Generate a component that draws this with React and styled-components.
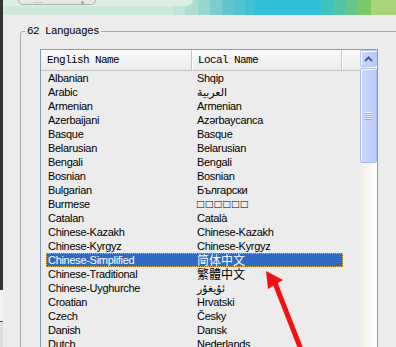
import React from 'react';
import styled, { createGlobalStyle } from 'styled-components';

const GlobalStyle = createGlobalStyle`
  html, body {
    margin: 0;
    padding: 0;
  }
  body {
    background: #ececec;
    overflow: hidden;
    font-family: "Liberation Sans", "DejaVu Sans", "Noto Sans CJK SC", sans-serif;
  }
`;

const Screen = styled.div`
  position: relative;
  display: flex;
  width: 396px;
  height: 347px;
  overflow: hidden;
  background: #ececec;
`;

const EdgeStrip = styled.div`
  flex: 0 0 3px;
  background: linear-gradient(to bottom, #343434 0px, #343434 290px, #f2f2f2 290px, #f2f2f2 321px, #4a4a4a 321px, #4a4a4a 322px, #dedede 322px);
`;

const Main = styled.div`
  flex: 1;
  min-width: 0;
  display: flex;
  flex-direction: column;
`;

const Banner = styled.div`
  height: 15px;
  flex-shrink: 0;
  display: flex;
  overflow: hidden;
  background-color: #30c0d8;
`;

const BannerLeft = styled.div`
  flex: 0 0 195px;
  display: flex;
  flex-direction: column;
  background-color: #aedcd2;
`;

const Glow = styled.div`
  width: 190px;
  height: 6px;
  display: flex;
  background-color: #dcefe5;
  border-bottom-right-radius: 6px;
`;

const Pill = styled.div`
  margin-left: 15px;
  width: 78px;
  height: 5px;
  display: flex;
  align-items: center;
  padding-left: 14px;
  box-sizing: border-box;
  background-color: #e4e9e6;
  border: 1px solid #a9b1ac;
  border-top: none;
  border-radius: 0 0 9px 9px;
`;

const Dash = styled.span`
  width: 10px;
  height: 1px;
  background-color: #c3c9c5;
  margin-right: 38px;
`;

const Dot = styled.span`
  width: 3px;
  height: 3px;
  border-radius: 50%;
  background-color: #8cc152;
`;

const BannerLower = styled.div`
  flex: 1;
  display: flex;
`;

const Band = styled.div`
  flex: 0 0 ${(p) => p.$w}px;
  background-color: ${(p) => p.$c};
`;

const Content = styled.div`
  flex-shrink: 0;
  padding-left: 17px;
`;

const GroupBox = styled.fieldset`
  margin: 9px 0 0 0;
  padding: 0;
  width: 500px;
  min-width: 0;
  height: 400px;
  box-sizing: border-box;
  border: 1px solid #a8a8a8;
  border-radius: 3px;
`;

const Legend = styled.legend`
  margin-left: 4px;
  padding: 0 2px;
  font-family: "Liberation Mono", monospace;
  font-size: 11px;
  line-height: 14px;
  letter-spacing: -0.6px;
  color: #000;
`;

const GroupBody = styled.div`
  padding: 11px 0 0 19px;
`;

const ListView = styled.div`
  width: 338px;
  height: 310px;
  box-sizing: border-box;
  display: flex;
  border: 1px solid #7f9db9;
  background: #ececec;
`;

const ListPane = styled.div`
  flex: 1;
  min-width: 0;
  display: flex;
  flex-direction: column;
  overflow: hidden;
`;

const Header = styled.div`
  height: 20px;
  flex-shrink: 0;
  display: flex;
  border-bottom: 1px solid #c2c2c2;
  background: linear-gradient(#fbfbfb, #ebebeb);
`;

const HeaderCell = styled.div`
  flex: 0 0 ${(p) => p.$width}px;
  box-sizing: border-box;
  padding-left: 6px;
  border-right: 1px solid #c6c6c6;
  box-shadow: 1px 0 0 #ffffff;
  font-family: "Liberation Mono", monospace;
  font-size: 11px;
  line-height: 20px;
  letter-spacing: -0.6px;
  color: #000;
  white-space: nowrap;
`;

const Rows = styled.div`
  display: flex;
  flex-direction: column;
`;

const Row = styled.div`
  display: flex;
  flex-shrink: 0;
  height: 14px;
  width: 297px;
  margin-left: 5px;
  box-sizing: border-box;
  font-size: 11px;
  line-height: 14px;
  letter-spacing: -0.3px;
  white-space: nowrap;
  color: ${(p) => (p.$selected ? '#ffffff' : '#000000')};
  background: ${(p) => (p.$selected ? '#316ac5' : 'transparent')};
  outline: ${(p) => (p.$selected ? '1px dotted #e8b04a' : 'none')};
  outline-offset: -1px;
`;

const NameCell = styled.span`
  flex: 0 0 146px;
  padding-left: 2px;
  box-sizing: border-box;
`;

const LocalCell = styled.span`
  flex: 1;
  padding-left: 5px;
  line-height: 14px;
  font-size: ${(p) => (p.$cjk ? '12px' : p.$boxes ? '12px' : '11px')};
  letter-spacing: ${(p) => (p.$cjk ? '0' : p.$boxes ? '1.5px' : '-0.3px')};
  font-family: ${(p) => (p.$cjk ? '"Noto Sans CJK SC", sans-serif' : 'inherit')};
`;

const ScrollBar = styled.div`
  flex: 0 0 17px;
  display: flex;
  flex-direction: column;
  background: linear-gradient(to right, #f0eee6, #faf9f5 70%, #ffffff);
`;

const ScrollButton = styled.div`
  height: 17px;
  box-sizing: border-box;
  display: flex;
  align-items: center;
  justify-content: center;
  border: 1px solid #b4c8f4;
  border-radius: 2px;
  box-shadow: inset 1px 1px 0 #ffffff;
  background: linear-gradient(to right, #cad9fd, #b6caf7);
`;

const Thumb = styled.div`
  margin-top: 1px;
  height: 95px;
  box-sizing: border-box;
  display: flex;
  flex-direction: column;
  align-items: center;
  justify-content: center;
  border: 1px solid #a8bdee;
  border-radius: 2px;
  box-shadow: inset 1px 1px 0 #ffffff;
  background: linear-gradient(to right, #c9d8fd, #b9ccf8);
`;

const Grip = styled.span`
  width: 7px;
  height: 1px;
  background: #eef3ff;
  box-shadow: 0 1px 0 #8ca5db;
  margin-bottom: 1px;
`;

const Overlay = styled.svg`
  position: absolute;
  left: 0;
  top: 0;
  pointer-events: none;
`;

const languages = [
  ['Albanian', 'Shqip'],
  ['Arabic', 'العربية'],
  ['Armenian', 'Armenian'],
  ['Azerbaijani', 'Azərbaycanca'],
  ['Basque', 'Basque'],
  ['Belarusian', 'Belarusian'],
  ['Bengali', 'Bengali'],
  ['Bosnian', 'Bosnian'],
  ['Bulgarian', 'Български'],
  ['Burmese', '□□□□□□', 'boxes'],
  ['Catalan', 'Català'],
  ['Chinese-Kazakh', 'Chinese-Kazakh'],
  ['Chinese-Kyrgyz', 'Chinese-Kyrgyz'],
  ['Chinese-Simplified', '简体中文', 'cjk'],
  ['Chinese-Traditional', '繁體中文', 'cjk'],
  ['Chinese-Uyghurche', 'ئۇيغۇر'],
  ['Croatian', 'Hrvatski'],
  ['Czech', 'Česky'],
  ['Danish', 'Dansk'],
  ['Dutch', 'Nederlands'],
];

// colour steps of the window strip: [width, colour]
const leftBands = [
  [170, '#cee9dc'],
  [12, '#c0e4d8'],
  [13, '#aedcd2'],
];

const rightBands = [
  [12, '#96d6cf'],
  [12, '#7ccecd'],
  [12, '#64c6cc'],
  [11, '#52c3cf'],
  [10, '#42c1d4'],
  [66, '#30c0d8'],
  [12, '#3fc1c0'],
  [12, '#52c3a3'],
  [12, '#66c58a'],
  [14, '#7cc768'],
  [25, '#a9d479'],
];

const App = () => {
  return (
    <Screen>
      <GlobalStyle />
      <EdgeStrip />
      <Main>
        <Banner>
          <BannerLeft>
            <Glow>
              <Pill>
                <Dash />
                <Dot />
              </Pill>
            </Glow>
            <BannerLower>
              {leftBands.map(([w, c]) => (
                <Band key={c} $w={w} $c={c} />
              ))}
            </BannerLower>
          </BannerLeft>
          {rightBands.map(([w, c]) => (
            <Band key={c} $w={w} $c={c} />
          ))}
        </Banner>
        <Content>
          <GroupBox>
            <Legend>62 Languages</Legend>
            <GroupBody>
              <ListView>
                <ListPane>
                  <Header>
                    <HeaderCell $width={151}>English Name</HeaderCell>
                    <HeaderCell $width={150}>Local Name</HeaderCell>
                  </Header>
                  <Rows>
                    {languages.map(([name, local, kind]) => (
                      <Row key={name} $selected={name === 'Chinese-Simplified'}>
                        <NameCell>{name}</NameCell>
                        <LocalCell $cjk={kind === 'cjk'} $boxes={kind === 'boxes'}>
                          {local}
                        </LocalCell>
                      </Row>
                    ))}
                  </Rows>
                </ListPane>
                <ScrollBar>
                  <ScrollButton>
                    <svg width="9" height="6" viewBox="0 0 9 6">
                      <path d="M1 5 L4.5 1.5 L8 5" fill="none" stroke="#4d6185" strokeWidth="2" />
                    </svg>
                  </ScrollButton>
                  <Thumb>
                    <Grip />
                    <Grip />
                    <Grip />
                    <Grip />
                  </Thumb>
                </ScrollBar>
              </ListView>
            </GroupBody>
          </GroupBox>
        </Content>
      </Main>
      <Overlay width="396" height="347" viewBox="0 0 396 347">
        <polygon points="266,271 268,289 283,280" fill="#f21010" />
        <line x1="275" y1="283" x2="302" y2="352" stroke="#f21010" strokeWidth="5" />
      </Overlay>
    </Screen>
  );
};

export default App;
